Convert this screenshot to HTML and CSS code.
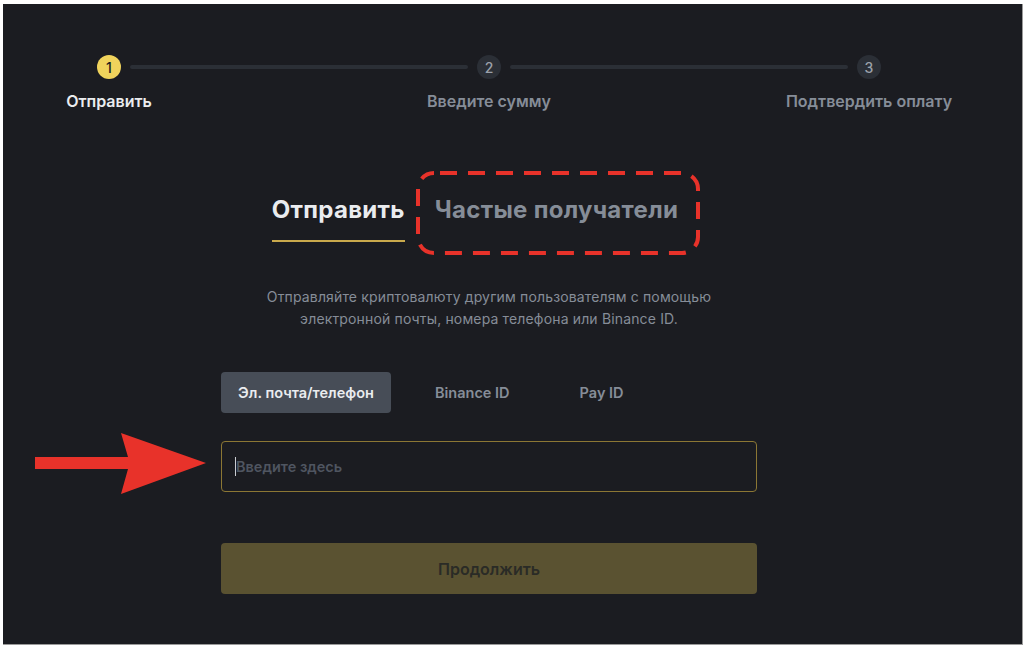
FILE: index.html
```html
<!DOCTYPE html>
<html lang="ru">
<head>
<meta charset="utf-8">
<title>Отправить</title>
<link rel="stylesheet" href="styles.css">
</head>
<body>
<div class="panel">
  <div class="stepper">
    <div class="track">
      <span class="dot active">1</span>
      <span class="bar"></span>
      <span class="dot">2</span>
      <span class="bar"></span>
      <span class="dot">3</span>
    </div>
    <div class="labels">
      <span class="label active">Отправить</span>
      <span class="label">Введите сумму</span>
      <span class="label">Подтвердить оплату</span>
    </div>
  </div>

  <div class="main">
    <div class="tabs">
      <div class="tab active">Отправить</div>
      <div class="tab">Частые получатели</div>
    </div>
    <p class="desc">Отправляйте криптовалюту другим пользователям с помощью<br>электронной почты, номера телефона или Binance ID.</p>
    <div class="seg">
      <div class="seg-item active">Эл. почта/телефон</div>
      <div class="seg-item bid">Binance ID</div>
      <div class="seg-item pid">Pay ID</div>
    </div>
    <div class="input"><span class="caret"></span><span class="ph">Введите здесь</span></div>
    <div class="btn">Продолжить</div>
  </div>

  <svg class="mark-box" width="284" height="84" viewBox="0 0 284 84">
    <rect x="2" y="2" width="280" height="80" rx="16" ry="16" fill="none" stroke="#e8322a" stroke-width="4" stroke-dasharray="17 11" stroke-dashoffset="-6"/>
  </svg>
  <svg class="mark-arrow" width="172" height="62" viewBox="0 0 172 62">
    <polygon points="0,24 93,24 86,0 171,30 86,61 93,36 0,36" fill="#e8322a"/>
  </svg>
</div>
</body>
</html>
```
FILE: styles.css
```css
* { box-sizing: border-box; }
html, body { margin: 0; padding: 0; background: #ffffff; }
body { font-family: Inter, "Noto Sans", sans-serif; }

.panel {
  position: relative;
  margin: 4px 1px 0 3px;
  width: 1020px;
  height: 641px;
  background: #1b1c21;
  border-right: 1px solid #9a9a9a;
  border-bottom: 1px solid #9a9a9a;
  overflow: hidden;
}

.stepper { padding-top: 51px; }
.track {
  display: flex;
  align-items: center;
  padding-left: 94px;
}
.dot {
  width: 24px; height: 24px;
  border-radius: 50%;
  background: #2b2f36;
  color: #9ba1aa;
  font-size: 14px;
  font-weight: 500;
  display: flex; align-items: center; justify-content: center;
  flex: none;
}
.dot.active { background: #f0d35c; color: #1b1c21; }
.bar {
  width: 338px;
  height: 4px;
  background: #2b2f36;
  margin: 0 9px;
  border-radius: 2px;
}
.labels {
  display: flex;
  gap: 180px;
  padding-left: 6px;
  margin-top: 12px;
}
.label {
  width: 200px;
  text-align: center;
  font-size: 16px;
  line-height: 20px;
  font-weight: 600;
  color: #868d98;
}
.label.active { color: #eaecef; }

.main {
  width: 536px;
  margin: 0 0 0 218px;
  display: flex;
  flex-direction: column;
  align-items: stretch;
}
.tabs {
  display: flex;
  justify-content: center;
  gap: 30px;
  margin-top: 84px;
  padding-right: 28px;
}
.tab {
  font-size: 24px;
  line-height: 30px;
  font-weight: 700;
  letter-spacing: 0.3px;
  color: #868d98;
  padding-bottom: 15px;
  border-bottom: 2px solid transparent;
}
.tab.active { color: #eaecef; border-bottom-color: #c9a94c; }

.desc {
  margin: 44px 0 0;
  text-align: center;
  font-size: 14px;
  line-height: 22px;
  letter-spacing: 0.15px;
  color: #868d98;
}
.seg {
  display: flex;
  margin-top: 42px;
}
.seg-item {
  height: 41px;
  display: flex; align-items: center;
  font-size: 14.5px;
  font-weight: 600;
  color: #868d98;
  border-radius: 4px;
}
.seg-item.active { background: #474d57; color: #eaecef; width: 170px; justify-content: center; }
.seg-item.bid { margin-left: 44px; }
.seg-item.pid { margin-left: 70px; }

.input {
  margin-top: 28px;
  height: 51px;
  border: 1px solid #8c7734;
  border-radius: 4px;
  display: flex;
  align-items: center;
  padding-left: 13px;
}
.caret { width: 1px; height: 19px; background: #c9ccd1; }
.ph { font-size: 14.5px; color: #4f5560; font-weight: 600; }

.btn {
  margin-top: 51px;
  height: 51px;
  border-radius: 4px;
  background: #5a5231;
  color: #2a2b26;
  font-size: 16px;
  font-weight: 600;
  display: flex; align-items: center; justify-content: center;
}

.mark-box {
  position: absolute;
  left: 413px; top: 167px;
}
.mark-arrow {
  position: absolute;
  left: 32px; top: 429px;
}
```
